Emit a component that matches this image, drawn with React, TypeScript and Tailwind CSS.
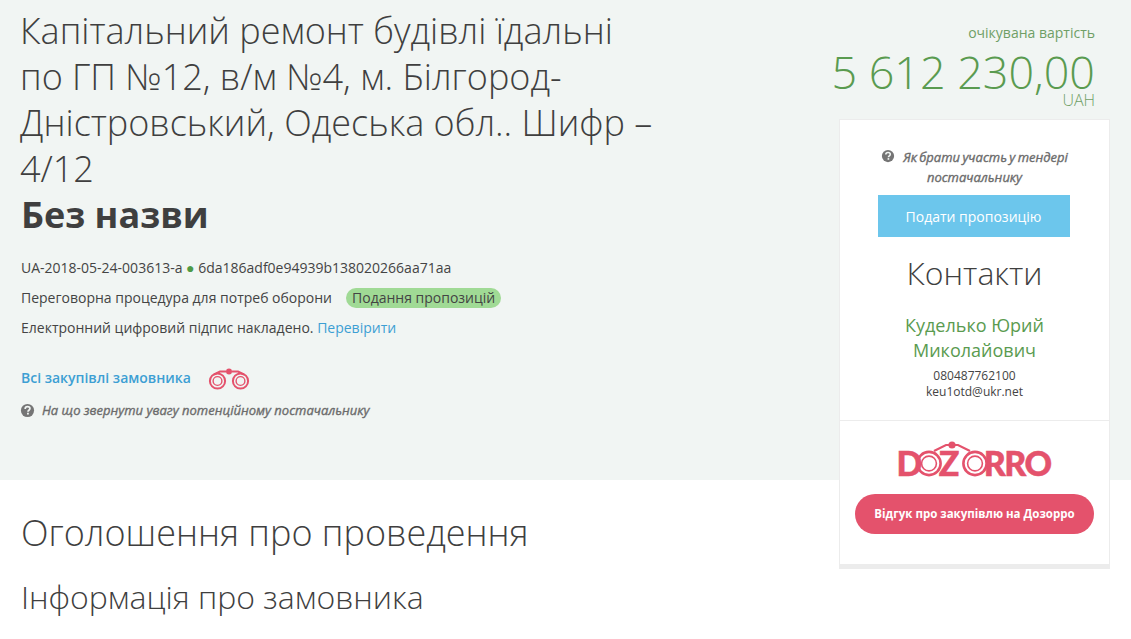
import React from "react";

const Question = ({ className = "" }: { className?: string }) => (
  <svg viewBox="0 0 16 16" className={className} aria-hidden="true">
    <circle cx="8" cy="8" r="7" fill="#757575" />
    <path d="M5.5 6.3c0-1.5 1.1-2.4 2.6-2.4s2.5.9 2.5 2c0 1.9-2.1 1.8-2.1 3.4" fill="none" stroke="#f1f5f3" strokeWidth="1.8" />
    <rect x="7.5" y="10.4" width="1.9" height="1.9" fill="#f1f5f3" />
  </svg>
);

const Binoculars = () => (
  <svg viewBox="0 0 42 22" className="w-[42px] h-[22px]" aria-hidden="true">
    <g fill="none" stroke="#e4526c">
      <circle cx="9.5" cy="13" r="7.6" strokeWidth="2" />
      <circle cx="9.5" cy="13" r="4.4" strokeWidth="1.4" />
      <circle cx="32.5" cy="13" r="7.6" strokeWidth="2" />
      <circle cx="32.5" cy="13" r="4.4" strokeWidth="1.4" />
      <path d="M6 6.5 L12 3.5 H18" strokeWidth="2" />
      <path d="M36 6.5 L30 3.5 H24" strokeWidth="2" />
    </g>
    <circle cx="21" cy="3.5" r="3" fill="#e4526c" />
  </svg>
);

const LogoOverlay = () => (
  <svg viewBox="0 0 152 36" className="absolute left-0 top-0 w-[152px] h-[36px]" aria-hidden="true">
    <g fill="none" stroke="#e4526c">
      <circle cx="30" cy="22.5" r="11.6" strokeWidth="2.6" />
      <circle cx="30" cy="22.5" r="7.4" strokeWidth="1.6" />
      <circle cx="76" cy="22.5" r="11.6" strokeWidth="2.6" />
      <circle cx="76" cy="22.5" r="7.4" strokeWidth="1.6" />
      <path d="M35 10 L47 4 H53" strokeWidth="2.2" />
      <path d="M71 10 L59 4 H53" strokeWidth="2.2" />
    </g>
    <circle cx="53" cy="4" r="3.6" fill="#e4526c" />
  </svg>
);

export default function App() {
  return (
    <div className="w-[1131px] h-[639px] overflow-hidden bg-white text-[#444] font-['Open_Sans',sans-serif]">
      <section className="h-[480px] bg-[#f1f5f3] flex justify-between pl-[21px] pr-[21px]">
        <div className="w-[650px] pt-[8px]">
          <h1 className="ml-[-1px] text-[36px] leading-[46px] font-light text-[#3f3f3f] whitespace-nowrap">
            Капітальний ремонт будівлі їдальні
            <br />
            по ГП №12, в/м №4, м. Білгород-
            <br />
            Дністровський, Одеська обл.. Шифр –
            <br />
            4/12
          </h1>
          <div className="text-[36px] leading-[46px] font-bold text-[#3f3f3f]">Без назви</div>
          <div className="mt-[15px] text-[14px] leading-[30px] text-[#444]">
            <div>
              UA-2018-05-24-003613-a <span className="text-[#4f9a45]">●</span> 6da186adf0e94939b138020266aa71aa
            </div>
            <div className="flex items-center">
              <span>Переговорна процедура для потреб оборони</span>
              <span className="ml-[14px] h-[20px] leading-[20px] px-[6px] rounded-[10px] bg-[#a0da95]">Подання пропозицій</span>
            </div>
            <div>
              Електронний цифровий підпис накладено. <span className="text-[#3d9fd3]">Перевірити</span>
            </div>
          </div>
          <div className="mt-[19px] flex items-center h-[30px]">
            <span className="text-[14px] font-semibold text-[#3d9fd3]">Всі закупівлі замовника</span>
            <span className="ml-[17px] mt-[4px]"><Binoculars /></span>
          </div>
          <div className="mt-[8px] ml-[-1px] flex items-center text-[13px] leading-[20px] font-normal italic text-[#6b6b6b] [-webkit-text-stroke:0.35px_#6b6b6b]">
            <Question className="w-[15px] h-[15px] mr-[7px]" />
            <span>На що звернути увагу потенційному постачальнику</span>
          </div>
        </div>

        <div className="w-[271px] flex flex-col items-end">
          <div className="mt-[22px] mr-[15px] text-[14px] leading-[22px] text-[#6f9f66]">очікувана вартість</div>
          <div className="mr-[15px] text-[44.9px] leading-[44px] font-light text-[#5a9b50] mt-[6px] whitespace-nowrap">5 612 230,00</div>
          <div className="mr-[15px] text-[16px] leading-[12px] font-light text-[#6f9f66]">UAH</div>
          <aside className="mt-[13px] w-[271px] shrink-0 h-[450px] bg-white border border-[#ececec] border-b-[5px] flex flex-col items-center">
            <div className="pt-[27px] w-[192px] text-center text-[13px] leading-[20px] font-normal italic text-[#6b6b6b] [-webkit-text-stroke:0.35px_#6b6b6b] [word-spacing:-1px]">
              <Question className="inline-block w-[14px] h-[14px] mr-[8px] align-[-1px]" />
              Як брати участь у тендері постачальнику
            </div>
            <div className="mt-[8px] mr-[2px] w-[192px] h-[42px] bg-[#6cc6ec] text-white text-[14px] flex items-center justify-center">Подати пропозицію</div>
            <div className="mt-[14px] text-[32px] leading-[44px] font-light text-[#3f3f3f]">Контакти</div>
            <div className="mt-[18px] w-[192px] text-center text-[18px] leading-[25px] text-[#5a9b50]">Куделько Юрий Миколайович</div>
            <div className="mt-[5px] text-[12px] leading-[16px] text-[#444] text-center">
              <div>080487762100</div>
              <div>keu1otd@ukr.net</div>
            </div>
            <div className="mt-[20px] w-full border-t border-[#ececec] flex flex-col items-center">
              <div className="relative mt-[20px] w-[152px] h-[37px] text-[#e4526c] text-[34px] leading-[30px] font-['Lato',sans-serif] font-black [-webkit-text-stroke:0.5px_#e4526c] flex items-end">
                <span className="w-[18px] ml-[-2px] mr-[2px]">D</span>
                <span className="w-[23px]" />
                <span className="w-[21px] text-center">Z</span>
                <span className="w-[25px]" />
                <span className="tracking-[-1.5px]">RRO</span>
                <LogoOverlay />
              </div>
              <div className="mt-[16px] w-[239px] h-[40px] rounded-[20px] bg-[#e4526c] text-white text-[11.5px] font-bold flex items-center justify-center">Відгук про закупівлю на Дозорро</div>
            </div>
          </aside>
        </div>
      </section>
      <section className="pl-[21px] pt-[30px] text-[#3f3f3f] font-light">
        <h2 className="text-[36px] leading-[46px]">Оголошення про проведення</h2>
        <h3 className="mt-[22px] text-[32px] leading-[38px]">Інформація про замовника</h3>
      </section>
    </div>
  );
}
